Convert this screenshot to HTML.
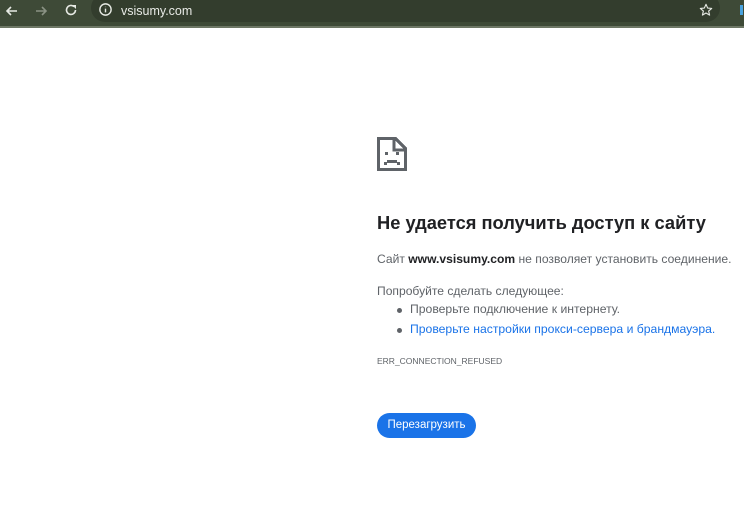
<!DOCTYPE html>
<html><head><meta charset="utf-8"><style>
*{margin:0;padding:0;box-sizing:border-box}
body{width:744px;height:512px;background:#fff;font-family:"Liberation Sans","Noto Sans CJK SC",sans-serif;position:relative;overflow:hidden}
.bar{position:absolute;left:0;top:0;width:744px;height:28px;background:#3e4a37;border-bottom:2px solid #6d7765}
.omni{position:absolute;left:91px;top:-6px;width:629px;height:28px;border-radius:14px;background:#333d2d}
.url{position:absolute;left:121px;top:4px;font-size:12.5px;color:#e8eae6}
.ic{position:absolute;color:#dfe3dc;line-height:1}
.t{position:absolute;left:377px;color:#5f6368;font-size:12.1px;white-space:nowrap}
h1{position:absolute;left:377px;top:212px;font-size:18.3px;font-weight:bold;color:#202124;white-space:nowrap}
ul{position:absolute;left:410px;top:302px;list-style:none;font-size:12.2px;color:#5f6368}
ul li{height:20px;position:relative;white-space:nowrap}
ul li:before{content:"";position:absolute;left:-13px;top:6px;width:5px;height:5px;border-radius:50%;background:#5f6368}
.btn{position:absolute;left:377px;top:413px;width:99px;height:25px;border-radius:13px;background:#1a73e8;color:#fff;font-size:11.5px;text-align:center;line-height:25px}
</style></head><body>
<div class="bar">
<div class="omni"></div>
<svg class="ic" style="left:4px;top:3px" width="16" height="16" viewBox="0 0 16 16"><path d="M13 8H3M7 4L3 8l4 4" stroke="#e6e9e3" stroke-width="1.6" fill="none"/></svg>
<svg class="ic" style="left:33px;top:3px" width="16" height="16" viewBox="0 0 16 16"><path d="M3 8h10M9 4l4 4-4 4" stroke="#8a9284" stroke-width="1.6" fill="none"/></svg>
<svg class="ic" style="left:63px;top:2px" width="16" height="16" viewBox="0 0 16 16"><path d="M12.5 8A4.5 4.5 0 1 1 11 4.6" stroke="#e6e9e3" stroke-width="1.6" fill="none"/><path d="M9 3h4v4z" fill="#e6e9e3"/></svg>
<svg class="ic" style="left:98px;top:2px" width="15" height="15" viewBox="0 0 16 16"><circle cx="8" cy="8" r="6" stroke="#e6e9e3" stroke-width="1.5" fill="none"/><path d="M8 7v4M8 5v.5" stroke="#e6e9e3" stroke-width="1.5"/></svg>
<div class="url">vsisumy.com</div>
<svg class="ic" style="left:699px;top:3px" width="14" height="14" viewBox="0 0 16 16"><path d="M8 1.5l1.9 4.3 4.6.4-3.5 3 1.1 4.6L8 11.4l-4.1 2.4 1.1-4.6-3.5-3 4.6-.4z" fill="none" stroke="#e6e9e3" stroke-width="1.3" stroke-linejoin="round"/></svg>
<div style="position:absolute;left:740px;top:5px;width:3px;height:10px;background:#4aa3df"></div>
</div>
<svg style="position:absolute;left:376px;top:136px" width="32" height="36" viewBox="0 0 32 36" shape-rendering="crispEdges">
<path d="M2.5 2.5H19.5L29.5 12.5V33.5H2.5Z" fill="none" stroke="#5f6368" stroke-width="3"/>
<path d="M18 2v12h12" fill="none" stroke="#5f6368" stroke-width="3"/>
<rect x="9" y="16" width="3" height="3" fill="#5f6368"/><rect x="20" y="16" width="3" height="3" fill="#5f6368"/>
<rect x="11" y="24" width="10" height="3" fill="#5f6368"/><rect x="8" y="26" width="3" height="3" fill="#5f6368"/><rect x="21" y="26" width="3" height="3" fill="#5f6368"/>
</svg>
<h1>Не удается получить доступ к сайту</h1>
<div class="t" style="top:252px">Сайт <b style="color:#202124">www.vsisumy.com</b> не позволяет установить соединение.</div>
<div class="t" style="top:284px">Попробуйте сделать следующее:</div>
<ul><li>Проверьте подключение к интернету.</li><li style="color:#1a73e8">Проверьте настройки прокси-сервера и брандмауэра.</li></ul>
<div class="t" style="top:356px;font-size:8.5px">ERR_CONNECTION_REFUSED</div>
<div class="btn">Перезагрузить</div>
</body></html>
